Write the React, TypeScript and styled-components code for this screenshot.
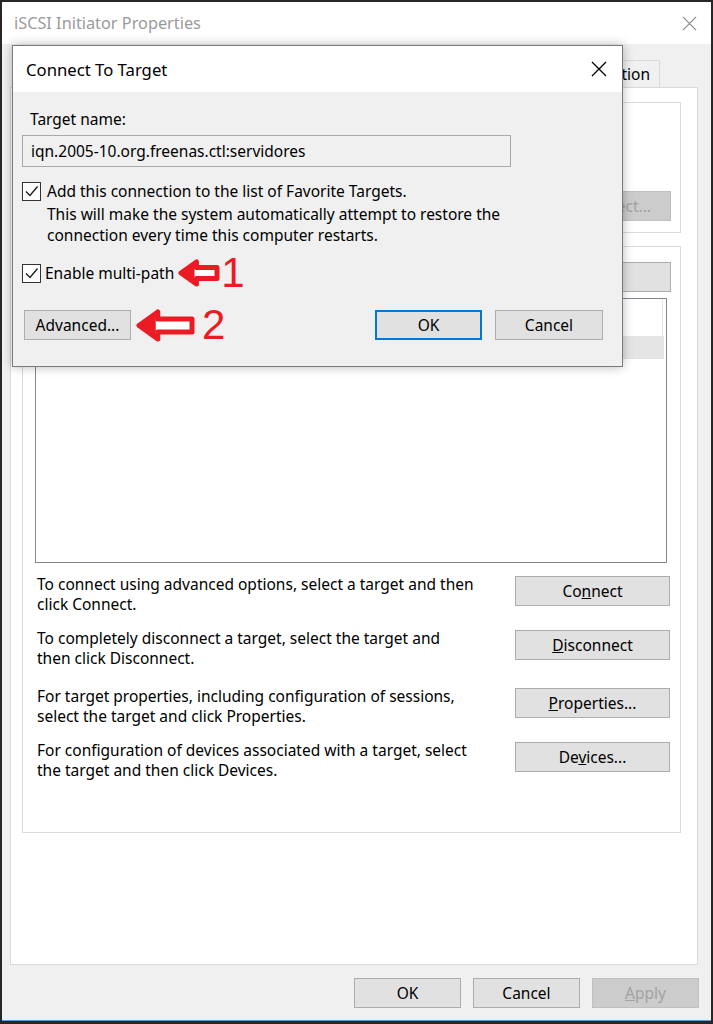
import React from 'react';
import styled, { createGlobalStyle } from 'styled-components';

const FONT = `"Noto Sans", "Open Sans", "Liberation Sans", sans-serif`;

const GlobalStyle = createGlobalStyle`
  html, body { margin: 0; padding: 0; background: #1b1b1b; }
  body { font-family: ${FONT}; font-size: 15.5px; color: #000; }
  * { box-sizing: border-box; }
`;

const Window = styled.div`
  position: relative;
  width: 713px;
  height: 1024px;
  border: 2px solid #262626;
  border-bottom-width: 3px;
  background: #f0f0f0;
  display: flex;
  flex-direction: column;
  overflow: hidden;
  box-shadow: inset 0 -1px 0 #5a9ad6;
`;

const TitleBar = styled.div<{ $active?: boolean }>`
  height: ${p => (p.$active ? 46 : 42)}px;
  flex: none;
  background: #fff;
  display: flex;
  align-items: center;
  justify-content: space-between;
  padding: ${p => (p.$active ? '0 15px 0 13px' : '0 14px 0 12px')};
  font-size: ${p => (p.$active ? 16.7 : 16.3)}px;
  color: ${p => (p.$active ? '#000' : '#9a9a9a')};
`;

const CloseIcon = ({ color, size }: { color: string; size: number }) => (
  <svg width={size} height={size} viewBox="0 0 16 16">
    <path d="M1 1 L15 15 M15 1 L1 15" stroke={color} strokeWidth="1.3" fill="none" />
  </svg>
);

const Body = styled.div`
  flex: 1;
  display: flex;
  flex-direction: column;
  padding: 16px 13px 0 8px;
`;

const TabStrip = styled.div`
  height: 27px;
  flex: none;
  margin-left: 6px;
  display: flex;
  justify-content: flex-end;
  align-items: flex-end;
  padding-right: 38px;
  overflow: hidden;
`;

const Tab = styled.div`
  height: 27px;
  padding: 0 9px 0 8px;
  margin-left: -1px;
  border: 1px solid #d9d9d9;
  border-bottom: none;
  background: #f0f0f0;
  line-height: 26px;
  white-space: nowrap;
`;

const Panel = styled.div`
  height: 878px;
  flex: none;
  background: #fff;
  border: 1px solid #d9d9d9;
  padding: 14px 16px 0 11px;
  display: flex;
  flex-direction: column;
  gap: 13px;
`;

const GroupBox = styled.div<{ $h: number }>`
  height: ${p => p.$h}px;
  border: 1px solid #dcdcdc;
  display: flex;
  flex-direction: column;
  padding: 0 9px 0 11px;
`;

const GroupText = styled.div`
  padding: 16px 0 0 4px;
  line-height: 20px;
  height: 88px;
  white-space: nowrap;
`;

const QuickRow = styled.div`
  display: flex;
  justify-content: flex-end;
  align-items: center;
`;

const Button = styled.button<{ $w?: number; $disabled?: boolean; $default?: boolean }>`
  width: ${p => p.$w ?? 107}px;
  height: 30px;
  flex: none;
  font-family: ${FONT};
  font-size: 15.5px;
  color: ${p => (p.$disabled ? '#a2a2a2' : '#000')};
  background: ${p => (p.$disabled ? '#cccccc' : '#e1e1e1')};
  border: ${p => (p.$default ? '2px solid #0078d7' : `1px solid ${p.$disabled ? '#bfbfbf' : '#adadad'}`)};
  padding: 0;
  white-space: nowrap;
  overflow: hidden;
`;

const RefreshRow = styled.div`
  display: flex;
  justify-content: flex-end;
  padding-top: 15px;
`;

const ListView = styled.div`
  margin: 6px 4px 0 1px;
  height: 265px;
  border: 1px solid #828790;
  background: #fff;
  display: flex;
  flex-direction: column;
`;

const ListHeader = styled.div`
  height: 37px;
  display: grid;
  grid-template-columns: 1fr 172px;
  border-right: 3px solid #fff;
`;

const HeaderCell = styled.div`
  padding: 8px 6px 0;
  border-right: 1px solid #e5e5e5;
`;

const ListRow = styled.div<{ $selected?: boolean }>`
  height: 23px;
  margin-right: 2px;
  display: grid;
  grid-template-columns: 1fr 172px;
  background: ${p => (p.$selected ? '#e5e5e5' : 'transparent')};
  line-height: 23px;
  padding-left: 6px;
`;

const Actions = styled.div`
  display: flex;
  flex-direction: column;
  padding: 13px 1px 0 3px;
`;

const ActionRow = styled.div<{ $top: number }>`
  display: flex;
  justify-content: space-between;
  align-items: flex-start;
  margin-top: ${p => p.$top}px;
  height: 38px;
`;

const ActionText = styled.div`
  line-height: 20px;
  margin-top: -2px;
  white-space: nowrap;
`;

const Footer = styled.div`
  display: flex;
  justify-content: flex-end;
  gap: 12px;
  padding: 13px 0 0 0;
  margin-right: -1px;
`;

/* ------------ dialog ------------- */

const Dialog = styled.div`
  position: absolute;
  left: 10px;
  top: 43px;
  width: 611px;
  height: 322px;
  border: 1px solid #7a7a7a;
  background: #f0f0f0;
  box-shadow: 0 0 10px rgba(0, 0, 0, 0.28);
  display: flex;
  flex-direction: column;
`;

const DialogBody = styled.div`
  flex: 1;
  padding: 17px 19px 0 9px;
  display: flex;
  flex-direction: column;
`;

const Label = styled.div`
  line-height: 20px;
  padding-left: 8px;
`;

const TextBox = styled.div`
  margin-top: 6px;
  width: 489px;
  height: 32px;
  border: 1px solid #a8a8a8;
  background: #f0f0f0;
  display: flex;
  align-items: center;
  padding-left: 8px;
`;

const CheckRow = styled.div<{ $top: number; $gap: number }>`
  margin-top: ${p => p.$top}px;
  height: 20px;
  display: flex;
  align-items: center;
  gap: ${p => p.$gap}px;
  white-space: nowrap;
`;

const Box = styled.span`
  width: 19px;
  height: 19px;
  flex: none;
  border: 1px solid #333;
  background: #fff;
  display: flex;
  align-items: center;
  justify-content: center;
`;

const Note = styled.div`
  padding-left: 25px;
  line-height: 21px;
  margin-top: 3px;
`;

const ButtonRow = styled.div`
  margin-top: 27px;
  height: 30px;
  display: flex;
  align-items: center;
  padding-left: 2px;
`;

const Spacer = styled.div`
  flex: 1;
`;

const Gap = styled.div<{ $w: number }>`
  width: ${p => p.$w}px;
  flex: none;
`;

const Marker = styled.span<{ $ml: number }>`
  display: flex;
  align-items: center;
  margin-left: ${p => p.$ml}px;
`;

const Num = styled.span<{ $ml: number }>`
  font-family: "Liberation Sans", Arial, sans-serif;
  font-size: 42px;
  line-height: 42px;
  color: #ea1b23;
  margin-left: ${p => p.$ml}px;
`;

const Check = () => (
  <Box>
    <svg width="15" height="15" viewBox="0 0 15 15">
      <path d="M2 7.5 L6 11.5 L13.5 2.5" stroke="#1f1f1f" strokeWidth="1.4" fill="none" />
    </svg>
  </Box>
);

const Arrow = ({ w, h }: { w: number; h: number }) => {
  const hx = h * 0.66;
  return (
    <svg width={w} height={h} viewBox={`0 0 ${w} ${h}`}>
      <polygon
        points={`3,${h / 2} ${hx},3 ${hx},${h * 0.3} ${w - 3},${h * 0.3} ${w - 3},${h * 0.7} ${hx},${h * 0.7} ${hx},${h - 3}`}
        fill="#fff"
        stroke="#ea1b23"
        strokeWidth="5"
        strokeLinejoin="round"
      />
      <polygon points={`6,${h / 2} ${hx - 2},7 ${hx - 2},${h - 7}`} fill="#ea1b23" />
    </svg>
  );
};

export default function App() {
  return (
    <>
      <GlobalStyle />
      <Window>
        <TitleBar>
          <span>iSCSI Initiator Properties</span>
          <CloseIcon color="#8a8a8a" size={15} />
        </TitleBar>
        <Body>
          <TabStrip>
            <Tab>Targets</Tab>
            <Tab>Discovery</Tab>
            <Tab>Favorite Targets</Tab>
            <Tab>Volumes and Devices</Tab>
            <Tab>RADIUS</Tab>
            <Tab>Configuration</Tab>
          </TabStrip>
          <Panel>
            <GroupBox $h={131}>
              <GroupText>To discover and log on to a target using a basic connection, type</GroupText>
              <QuickRow>
                <Button $w={158} $disabled>Quick Connect...</Button>
              </QuickRow>
            </GroupBox>
            <GroupBox $h={587}>
              <RefreshRow>
                <Button $w={170}>Refresh</Button>
              </RefreshRow>
              <ListView>
                <ListHeader>
                  <HeaderCell>Name</HeaderCell>
                  <HeaderCell>Status</HeaderCell>
                </ListHeader>
                <ListRow $selected>
                  <span>iqn.2005-10.org.freenas.ctl:servidores</span>
                  <span>Inactive</span>
                </ListRow>
              </ListView>
              <Actions>
                <ActionRow $top={0}>
                  <ActionText>
                    To connect using advanced options, select a target and then
                    <br />
                    click Connect.
                  </ActionText>
                  <Button $w={155}>Co<u>n</u>nect</Button>
                </ActionRow>
                <ActionRow $top={16}>
                  <ActionText>
                    To completely disconnect a target, select the target and
                    <br />
                    then click Disconnect.
                  </ActionText>
                  <Button $w={155}><u>D</u>isconnect</Button>
                </ActionRow>
                <ActionRow $top={20}>
                  <ActionText>
                    For target properties, including configuration of sessions,
                    <br />
                    select the target and click Properties.
                  </ActionText>
                  <Button $w={155}><u>P</u>roperties...</Button>
                </ActionRow>
                <ActionRow $top={16}>
                  <ActionText>
                    For configuration of devices associated with a target, select
                    <br />
                    the target and then click Devices.
                  </ActionText>
                  <Button $w={155}>De<u>v</u>ices...</Button>
                </ActionRow>
              </Actions>
            </GroupBox>
          </Panel>
          <Footer>
            <Button>OK</Button>
            <Button>Cancel</Button>
            <Button $disabled><u>A</u>pply</Button>
          </Footer>
        </Body>

        <Dialog>
          <TitleBar $active>
            <span>Connect To Target</span>
            <CloseIcon color="#000" size={16} />
          </TitleBar>
          <DialogBody>
            <Label>Target name:</Label>
            <TextBox>iqn.2005-10.org.freenas.ctl:servidores</TextBox>
            <CheckRow $top={14} $gap={6}>
              <Check />
              <span>Add this connection to the list of Favorite Targets.</span>
            </CheckRow>
            <Note>
              This will make the system automatically attempt to restore the
              <br />
              connection every time this computer restarts.
            </Note>
            <CheckRow $top={17} $gap={4}>
              <Check />
              <span>Enable multi-path</span>
              <Marker $ml={0}>
                <Arrow w={42} h={28} />
              </Marker>
              <Num $ml={-3}>1</Num>
            </CheckRow>
            <ButtonRow>
              <Button>Advanced...</Button>
              <Marker $ml={5}>
                <Arrow w={59} h={33} />
              </Marker>
              <Num $ml={7}>2</Num>
              <Spacer />
              <Button $default>OK</Button>
              <Gap $w={13} />
              <Button $w={108}>Cancel</Button>
            </ButtonRow>
          </DialogBody>
        </Dialog>
      </Window>
    </>
  );
}
